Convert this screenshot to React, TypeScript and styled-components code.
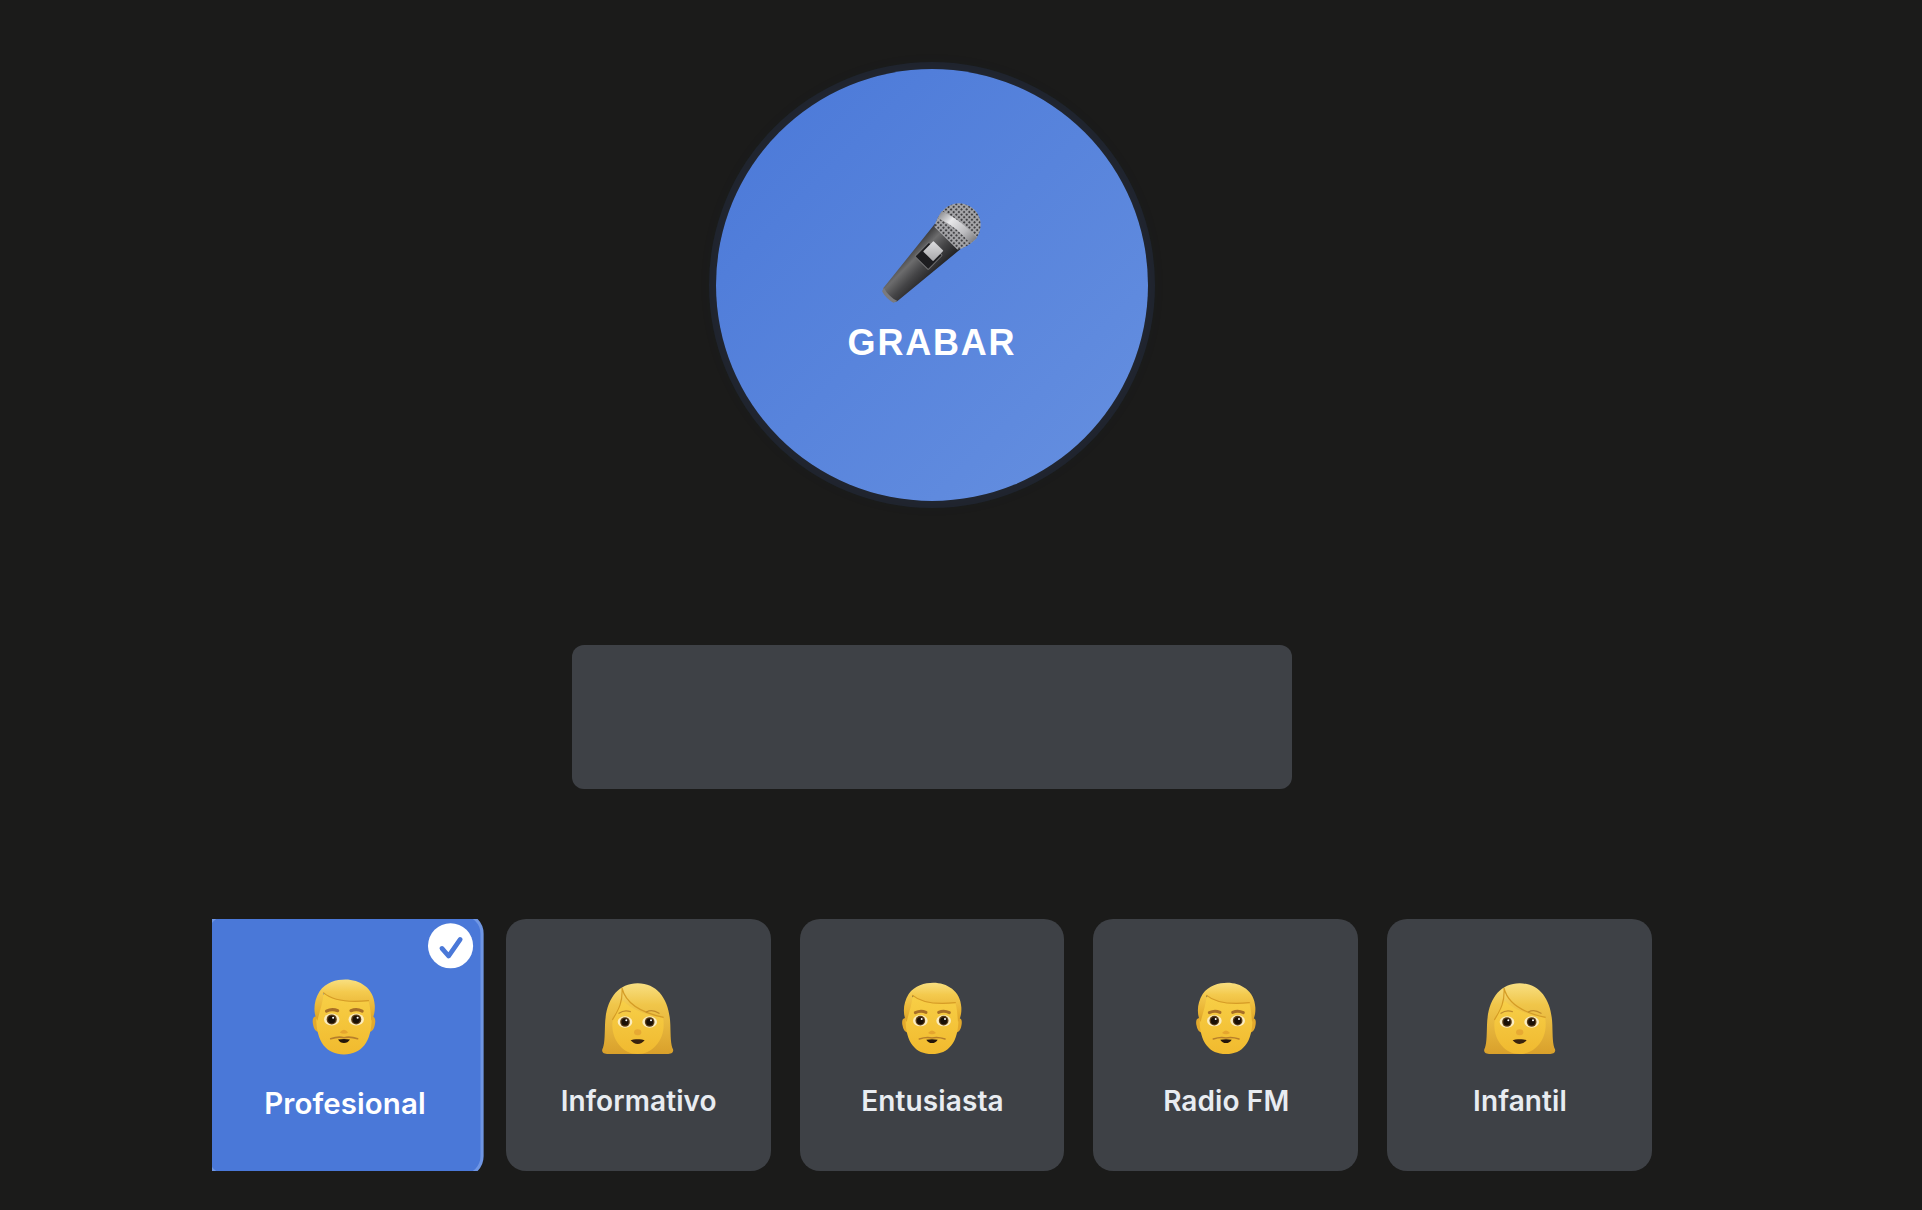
import React from "react";
import styled, { createGlobalStyle } from "styled-components";

const Global = createGlobalStyle`
  html, body { margin: 0; padding: 0; background: #1b1b1a; height: 100%; overflow: hidden; }
  * { box-sizing: border-box; }
`;

const Page = styled.main`
  width: 1864px;
  height: 1210px;
  padding-top: 69px;
  display: flex;
  flex-direction: column;
  align-items: center;
`;

const RecordButton = styled.button`
  width: 432px;
  height: 432px;
  flex: none;
  border: 0;
  padding: 0 0 15px;
  border-radius: 50%;
  background: linear-gradient(135deg, #4a78d8 0%, #6690e0 100%);
  box-shadow: 0 0 0 7px rgba(74, 120, 216, 0.1), 0 0 24px rgba(74, 120, 216, 0.04);
  display: flex;
  flex-direction: column;
  align-items: center;
  justify-content: center;
`;

const RecordLabel = styled.span`
  margin-top: 1px;
  font: 700 36px/44px "Liberation Sans", Arial, sans-serif;
  letter-spacing: 1.8px;
  color: #fff;
`;

const Transcript = styled.div`
  width: 720px;
  height: 144px;
  flex: none;
  margin-top: 144px;
  border-radius: 12px;
  background: #3e4146;
`;

const VoiceRow = styled.div`
  width: 1440px;
  height: 252px;
  flex: none;
  margin-top: 130px;
  display: grid;
  grid-template-columns: repeat(5, 1fr);
  gap: 28.8px;
  overflow: hidden;
`;

const VoiceCard = styled.div<{ $selected?: boolean }>`
  position: relative;
  height: 252px;
  border-radius: 20px;
  display: flex;
  flex-direction: column;
  align-items: center;
  padding-top: 48px;
  background: ${(p) => (p.$selected ? "#4a78d8" : "#3e4146")};
  border: 3px solid ${(p) => (p.$selected ? "#6f96e4" : "transparent")};
  color: ${(p) => (p.$selected ? "#ffffff" : "#e8ecf1")};
  transform: ${(p) => (p.$selected ? "scale(1.05)" : "none")};
`;

const EmojiIcon = styled.svg`
  width: 100px;
  height: 100px;
  flex: none;
`;

const VoiceName = styled.span`
  margin-top: 13px;
  padding-left: 1px;
  font: 600 28px/36px Inter, "Noto Sans", sans-serif;
  letter-spacing: 0.1px;
`;

const CheckBadge = styled.span`
  position: absolute;
  top: 7px;
  right: 7px;
  width: 43px;
  height: 43px;
  border-radius: 50%;
  background: #fff;
`;

const CheckIcon = styled.svg`
  display: block;
  width: 43px;
  height: 43px;
`;

const MicIcon = styled.svg`
  width: 150px;
  height: 130px;
  flex: none;
`;

function Microphone() {
  return (
    <MicIcon viewBox="-9 0 450 390" aria-hidden="true">
      <defs>
        <linearGradient id="micBody" x1="0" x2="1" y1="0" y2="0">
          <stop offset="0" stopColor="#3a3a3c" />
          <stop offset="0.28" stopColor="#6c6c6d" />
          <stop offset="0.6" stopColor="#444446" />
          <stop offset="1" stopColor="#212123" />
        </linearGradient>
        <linearGradient id="micBand" x1="0" x2="1" y1="0" y2="0">
          <stop offset="0" stopColor="#8d8d90" />
          <stop offset="0.3" stopColor="#e8e8ea" />
          <stop offset="0.7" stopColor="#bcbcbf" />
          <stop offset="1" stopColor="#808083" />
        </linearGradient>
        <linearGradient id="micCap" x1="0" x2="1" y1="0" y2="1">
          <stop offset="0" stopColor="#dedee0" />
          <stop offset="1" stopColor="#a6a6a9" />
        </linearGradient>
        <pattern id="mesh" width="11" height="11" patternUnits="userSpaceOnUse">
          <rect width="11" height="11" fill="#a8a8ab" />
          <circle cx="5.5" cy="5.5" r="3.4" fill="#3f3f42" />
        </pattern>
      </defs>
      <g transform="translate(297 105) rotate(44.6)">
        <path d="M-54 48 L54 48 L29 292 Q26 304 16 304 L-16 304 Q-26 304 -29 292 Z" fill="url(#micBody)" />
        <path d="M-65 0 A65 65 0 0 1 65 0 Q64 34 48 56 L-48 56 Q-64 34 -65 0 Z" fill="url(#mesh)" />
        <path d="M-66 6 Q0 -16 66 -10 L63 16 Q0 8 -60 30 Z" fill="url(#micBand)" />
        <rect x="-28" y="100" width="56" height="60" rx="3" fill="#1d1d20" stroke="#707072" strokeWidth="3" />
        <rect x="-21" y="88" width="42" height="44" rx="2" fill="url(#micCap)" />
        <path d="M-29 292 Q0 302 29 292 L24 304 Q0 311 -24 304 Z" fill="#7a7a7d" />
      </g>
    </MicIcon>
  );
}

function Eye({ x, y }: { x: number; y: number }) {
  return (
    <g>
      <ellipse cx={x} cy={y} rx="22" ry="17" fill="#fbedc0" />
      <circle cx={x} cy={y} r="14.5" fill="#5a3b15" />
      <circle cx={x} cy={y} r="10.5" fill="#1a1006" />
      <circle cx={x + 4} cy={y - 5} r="3" fill="#fff" />
    </g>
  );
}

function Man({ id }: { id: string }) {
  return (
    <EmojiIcon viewBox="2 0 300 300" aria-hidden="true">
      <defs>
        <linearGradient id={`${id}f`} x1="0" x2="0" y1="0" y2="1">
          <stop offset="0" stopColor="#f8d149" />
          <stop offset="1" stopColor="#f1ba2e" />
        </linearGradient>
        <linearGradient id={`${id}h`} x1="0" x2="0" y1="0" y2="1">
          <stop offset="0" stopColor="#f8df80" />
          <stop offset="0.3" stopColor="#f4ca4e" />
          <stop offset="0.75" stopColor="#e8b232" />
          <stop offset="1" stopColor="#dba228" />
        </linearGradient>
      </defs>
      <path d="M78 145 C64 140 60 152 64 168 C67 184 76 190 88 188 Z" fill="#e3a92c" />
      <path d="M226 145 C240 140 244 152 240 168 C237 184 228 190 216 188 Z" fill="#e3a92c" />
      <path d="M74 120 C74 88 110 60 152 60 C194 60 230 88 230 120 C238 208 208 252 152 252 C96 252 66 208 74 120 Z" fill={`url(#${id}f)`} />
      <path d="M76 156 C64 136 64 100 82 72 C100 46 130 38 156 38 C196 38 238 62 240 112 C241 130 237 146 230 156 C228 136 228 118 222 99 C172 104 126 104 94 76 C92 105 82 130 76 156 Z" fill={`url(#${id}h)`} />
      <path d="M94 76 C124 102 172 103 222 98" fill="none" stroke="#d69c26" strokeWidth="3.5" strokeLinecap="round" />
      <path d="M102 128 Q118 120 134 127" fill="none" stroke="#a86f26" strokeWidth="9" strokeLinecap="round" />
      <path d="M172 127 Q188 120 204 128" fill="none" stroke="#a86f26" strokeWidth="9" strokeLinecap="round" />
      <Eye x={117} y={152} />
      <Eye x={187} y={152} />
      <path d="M140 189 Q152 174 164 189 Q152 197 140 189 Z" fill="#e5a52e" />
      <path d="M114 207 Q135 200 152 204 Q170 200 191 207" fill="none" stroke="#b77f2b" strokeWidth="4.5" strokeLinecap="round" />
      <path d="M135 209 Q152 206 169 209 Q163 219 152 219 Q141 219 135 209 Z" fill="#24150a" />
    </EmojiIcon>
  );
}

function Woman({ id }: { id: string }) {
  return (
    <EmojiIcon viewBox="1 0 300 300" aria-hidden="true">
      <defs>
        <linearGradient id={`${id}h`} x1="0" x2="0" y1="0" y2="1">
          <stop offset="0" stopColor="#f8df82" />
          <stop offset="0.3" stopColor="#f0c64a" />
          <stop offset="1" stopColor="#d9a02b" />
        </linearGradient>
        <linearGradient id={`${id}f`} x1="0" x2="0" y1="0" y2="1">
          <stop offset="0" stopColor="#f7cf48" />
          <stop offset="1" stopColor="#f0b92f" />
        </linearGradient>
      </defs>
      <path d="M150 40 C212 40 246 92 248 165 C249 200 249 225 256 238 C259 248 250 252 238 252 L62 252 C50 252 41 248 44 238 C51 225 51 200 52 165 C54 92 88 40 150 40 Z" fill={`url(#${id}h)`} />
      <path d="M150 252 C106 252 74 212 74 165 C74 135 92 112 106 92 C130 118 176 134 226 144 C228 150 228 158 228 165 C228 212 194 252 150 252 Z" fill={`url(#${id}f)`} />
      <path d="M74 150 C90 122 106 100 103 54 C112 92 150 126 228 142" fill="none" stroke="#d59c26" strokeWidth="3.5" />
      <path d="M94 130 Q110 118 128 125" fill="none" stroke="#c08c2c" strokeWidth="3.5" strokeLinecap="round" />
      <path d="M176 126 Q194 116 214 130" fill="none" stroke="#c08c2c" strokeWidth="3.5" strokeLinecap="round" />
      <Eye x={112} y={156} />
      <Eye x={186} y={156} />
      <ellipse cx="150" cy="187" rx="11" ry="9" fill="#e7a932" />
      <path d="M129 211 Q141 206 150 208 Q159 206 171 211 Q162 222 150 222 Q138 222 129 211 Z" fill="#38220e" />
    </EmojiIcon>
  );
}

const voices = [
  { name: "Profesional", kind: "man", selected: true },
  { name: "Informativo", kind: "woman" },
  { name: "Entusiasta", kind: "man" },
  { name: "Radio FM", kind: "man" },
  { name: "Infantil", kind: "woman" },
];

export default function App() {
  return (
    <>
      <Global />
      <Page>
        <RecordButton type="button">
          <Microphone />
          <RecordLabel>GRABAR</RecordLabel>
        </RecordButton>
        <Transcript />
        <VoiceRow>
          {voices.map((v, i) => (
            <VoiceCard key={v.name} $selected={v.selected}>
              {v.selected && (
                <CheckBadge>
                  <CheckIcon viewBox="-21.5 -21.5 43 43" fill="none" stroke="#4a78d8" strokeWidth="4.5" strokeLinecap="round" strokeLinejoin="round" aria-hidden="true">
                    <path d="M-8.2 2.5 L-1.9 9.8 L9.2 -6" />
                  </CheckIcon>
                </CheckBadge>
              )}
              {v.kind === "man" ? <Man id={`m${i}`} /> : <Woman id={`w${i}`} />}
              <VoiceName>{v.name}</VoiceName>
            </VoiceCard>
          ))}
        </VoiceRow>
      </Page>
    </>
  );
}
